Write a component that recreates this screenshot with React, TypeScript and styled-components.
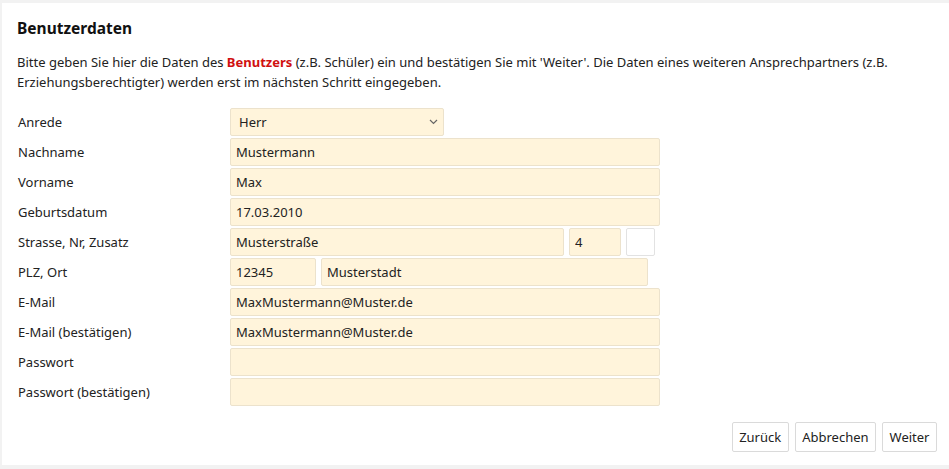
import React from 'react';
import styled, { createGlobalStyle } from 'styled-components';

const Global = createGlobalStyle`
  html, body { margin: 0; padding: 0; background: #f2f2f2; }
  body {
    font-family: "Noto Sans", "Open Sans", sans-serif;
    font-size: 13px;
    color: #222;
  }
  * { box-sizing: border-box; }
`;

const Panel = styled.div`
  margin: 3px 0 0 2px;
  background: #fff;
  height: 462px;
  padding: 13px 12px 0 15px;
  display: flex;
  flex-direction: column;
`;

const Title = styled.h2`
  margin: 0;
  font-size: 15.5px;
  font-weight: 700;
  line-height: 24px;
  color: #111;
`;

const Intro = styled.p`
  margin: 12px 0 0;
  line-height: 20px;
  color: #222;
`;

const Strong = styled.b`
  color: #d01010;
  font-weight: 700;
`;

const Form = styled.div`
  margin-top: 16px;
  display: grid;
  grid-template-columns: 213px 1fr;
  row-gap: 2px;
`;

const Label = styled.label`
  display: flex;
  align-items: center;
  height: 28px;
  padding-left: 1px;
`;

const Fields = styled.div`
  display: flex;
  gap: 5px;
  height: 28px;
`;

const Input = styled.input<{ $w: number; $blank?: boolean }>`
  width: ${(p) => p.$w}px;
  height: 28px;
  margin: 0;
  padding: 0 5px;
  font: inherit;
  color: #222;
  background: ${(p) => (p.$blank ? '#fff' : '#fff4db')};
  border: 1px solid ${(p) => (p.$blank ? '#e2e2e2' : '#ece2cc')};
  border-radius: 2px;
  outline: none;
`;

const SelectWrap = styled.div`
  position: relative;
  width: 214px;
  height: 28px;
`;

const Select = styled.select`
  appearance: none;
  width: 100%;
  height: 100%;
  margin: 0;
  padding: 0 8px;
  font: inherit;
  color: #222;
  background: #fff4db;
  border: 1px solid #ece2cc;
  border-radius: 2px;
  outline: none;
`;

const Chevron = styled.svg`
  position: absolute;
  right: 6px;
  top: 11px;
  pointer-events: none;
`;

const Actions = styled.div`
  margin-top: 16px;
  display: flex;
  justify-content: flex-end;
  gap: 6px;
`;

const Button = styled.button`
  height: 30px;
  padding: 0 6.5px;
  font: inherit;
  color: #222;
  background: #fff;
  border: 1px solid #dadada;
  border-radius: 2px;
`;

export default function App() {
  return (
    <>
      <Global />
      <Panel>
        <Title>Benutzerdaten</Title>
        <Intro>
          Bitte geben Sie hier die Daten des <Strong>Benutzers</Strong> (z.B. Schüler) ein und bestätigen Sie mit
          'Weiter'. Die Daten eines weiteren Ansprechpartners (z.B. Erziehungsberechtigter) werden erst im nächsten
          Schritt eingegeben.
        </Intro>
        <Form>
          <Label>Anrede</Label>
          <Fields>
            <SelectWrap>
              <Select defaultValue="Herr">
                <option>Herr</option>
                <option>Frau</option>
              </Select>
              <Chevron width="9" height="6" viewBox="0 0 9 6">
                <path d="M1 1l3.5 3.5L8 1" fill="none" stroke="#666" strokeWidth="1.2" />
              </Chevron>
            </SelectWrap>
          </Fields>
          <Label>Nachname</Label>
          <Fields>
            <Input $w={430} defaultValue="Mustermann" />
          </Fields>
          <Label>Vorname</Label>
          <Fields>
            <Input $w={430} defaultValue="Max" />
          </Fields>
          <Label>Geburtsdatum</Label>
          <Fields>
            <Input $w={430} defaultValue="17.03.2010" />
          </Fields>
          <Label>Strasse, Nr, Zusatz</Label>
          <Fields>
            <Input $w={334} defaultValue="Musterstraße" />
            <Input $w={52} defaultValue="4" />
            <Input $w={29} $blank defaultValue="" />
          </Fields>
          <Label>PLZ, Ort</Label>
          <Fields>
            <Input $w={86} defaultValue="12345" />
            <Input $w={327} defaultValue="Musterstadt" />
          </Fields>
          <Label>E-Mail</Label>
          <Fields>
            <Input $w={430} defaultValue="MaxMustermann@Muster.de" />
          </Fields>
          <Label>E-Mail (bestätigen)</Label>
          <Fields>
            <Input $w={430} defaultValue="MaxMustermann@Muster.de" />
          </Fields>
          <Label>Passwort</Label>
          <Fields>
            <Input $w={430} type="password" defaultValue="" />
          </Fields>
          <Label>Passwort (bestätigen)</Label>
          <Fields>
            <Input $w={430} type="password" defaultValue="" />
          </Fields>
        </Form>
        <Actions>
          <Button>Zurück</Button>
          <Button>Abbrechen</Button>
          <Button>Weiter</Button>
        </Actions>
      </Panel>
    </>
  );
}
